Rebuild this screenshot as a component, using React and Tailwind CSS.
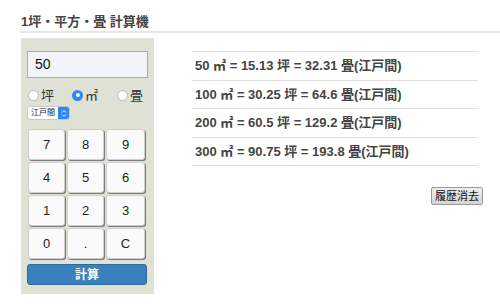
import React from "react";

const font = { fontFamily: '"Liberation Sans", "Noto Sans CJK JP", sans-serif' };

function Radio({ checked, label }) {
  return (
    <div className="flex items-center gap-[2px]">
      {checked ? (
        <span className="w-[11px] h-[11px] rounded-full bg-[#2f86f6] flex items-center justify-center">
          <span className="w-[4px] h-[4px] rounded-full bg-white" />
        </span>
      ) : (
        <span className="w-[11px] h-[11px] rounded-full bg-white border border-[#b9b9b9]" />
      )}
      <span className="text-[13px] text-[#333] leading-none">{label}</span>
    </div>
  );
}

function Key({ children }) {
  return (
    <button className="h-[31px] bg-[#fafafa] border border-[#cfcfcf] rounded-[3px] shadow-[1px_1px_0_#7a7a7a] text-[13px] text-[#222] flex items-center justify-center">
      {children}
    </button>
  );
}

export default function App() {
  const rows = [
    "50 ㎡ = 15.13 坪 = 32.31 畳(江戸間)",
    "100 ㎡ = 30.25 坪 = 64.6 畳(江戸間)",
    "200 ㎡ = 60.5 坪 = 129.2 畳(江戸間)",
    "300 ㎡ = 90.75 坪 = 193.8 畳(江戸間)",
  ];
  return (
    <div className="w-[500px] h-[305px] bg-white pl-[20px] pt-[13px]" style={font}>
      <div className="text-[13px] font-bold text-[#444] leading-[17px] pl-[1px]">1坪・平方・畳 計算機</div>
      <div className="mt-[1px] h-[2px] bg-[#e6e6e6]" />
      <div className="flex mt-[5px]">
        <div className="w-[133px] h-[256px] ml-[1px] bg-[#dfe1d5] px-[6px] pt-[13px]">
          <div className="h-[27px] w-[121px] bg-[#f3f4f7] border border-[#aaa] pl-[7px] flex items-center text-[14px] text-[#111]">
            50
          </div>
          <div className="flex items-center mt-[11px] ml-[1px] h-[12px]">
            <Radio label="坪" />
            <div className="ml-[18px]"><Radio checked label="㎡" /></div>
            <div className="ml-[19px]"><Radio label="畳" /></div>
          </div>
          <div className="mt-[5px] flex h-[14px] w-[43px] rounded-[3px] overflow-hidden border border-[#c8c8c8] bg-white">
            <span className="flex-1 text-[8px] leading-[12px] pl-[3px] text-[#222]">江戸間</span>
            <span className="w-[11px] bg-[#2f86f6] flex items-center justify-center">
              <svg width="6" height="9" viewBox="0 0 6 9">
                <path d="M1 3.5 L3 1.5 L5 3.5 M1 5.5 L3 7.5 L5 5.5" stroke="white" strokeWidth="1" fill="none" />
              </svg>
            </span>
          </div>
          <div className="grid grid-cols-[37px_37px_39px] gap-x-[2px] gap-y-[2px] mt-[9px] ml-[1px]">
            {["7", "8", "9", "4", "5", "6", "1", "2", "3", "0", ".", "C"].map((k) => (
              <Key key={k}>{k}</Key>
            ))}
          </div>
          <button className="mt-[5px] w-[120px] h-[21px] rounded-[3px] bg-[#3a80bd] border border-[#2e6a9f] text-white text-[12px] font-bold flex items-center justify-center">
            計算
          </button>
        </div>
        <div className="ml-[38px] w-[286px] mt-[13px]">
          <div className="border-t border-[#dedede]">
            {rows.map((r) => (
              <div key={r} className="h-[28.5px] border-b border-[#dedede] flex items-center pl-[3px] text-[13px] font-bold text-[#444]">
                {r}
              </div>
            ))}
          </div>
          <div className="flex justify-end mt-[21px] mr-[-5px]">
            <button className="h-[18px] px-[3px] bg-gradient-to-b from-[#eee] to-[#d4d4d4] border border-[#9a9a9a] rounded-[2px] text-[11px] text-[#111] leading-none">
              履歴消去
            </button>
          </div>
        </div>
      </div>
    </div>
  );
}
